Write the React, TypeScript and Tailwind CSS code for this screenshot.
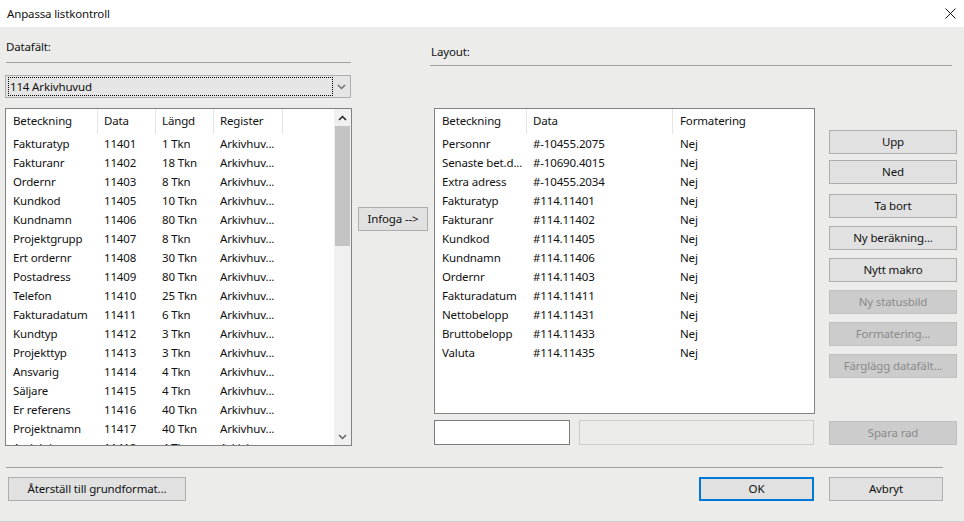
import React from "react"

const fields = [
  ["Fakturatyp", "11401", "1 Tkn"],
  ["Fakturanr", "11402", "18 Tkn"],
  ["Ordernr", "11403", "8 Tkn"],
  ["Kundkod", "11405", "10 Tkn"],
  ["Kundnamn", "11406", "80 Tkn"],
  ["Projektgrupp", "11407", "8 Tkn"],
  ["Ert ordernr", "11408", "30 Tkn"],
  ["Postadress", "11409", "80 Tkn"],
  ["Telefon", "11410", "25 Tkn"],
  ["Fakturadatum", "11411", "6 Tkn"],
  ["Kundtyp", "11412", "3 Tkn"],
  ["Projekttyp", "11413", "3 Tkn"],
  ["Ansvarig", "11414", "4 Tkn"],
  ["Säljare", "11415", "4 Tkn"],
  ["Er referens", "11416", "40 Tkn"],
  ["Projektnamn", "11417", "40 Tkn"],
  ["Avdelning", "11418", "4 Tkn"],
]

const layout = [
  ["Personnr", "#-10455.2075"],
  ["Senaste bet.d...", "#-10690.4015"],
  ["Extra adress", "#-10455.2034"],
  ["Fakturatyp", "#114.11401"],
  ["Fakturanr", "#114.11402"],
  ["Kundkod", "#114.11405"],
  ["Kundnamn", "#114.11406"],
  ["Ordernr", "#114.11403"],
  ["Fakturadatum", "#114.11411"],
  ["Nettobelopp", "#114.11431"],
  ["Bruttobelopp", "#114.11433"],
  ["Valuta", "#114.11435"],
]

function Btn({ label, disabled, w = "w-full" }: { label: string; disabled?: boolean; w?: string }) {
  return (
    <div
      className={
        disabled
          ? `${w} h-[24px] flex items-center justify-center border border-[#bfbfbf] bg-[#cccccc] text-[#8a8a8a]`
          : `${w} h-[24px] flex items-center justify-center border border-[#adadad] bg-[#e1e1e1]`
      }
    >
      {label}
    </div>
  )
}

function Chevron({ up, color = "#606060" }: { up?: boolean; color?: string }) {
  return (
    <svg width="9" height="6" viewBox="0 0 9 6">
      <polyline
        points={up ? "1,5 4.5,1.5 8,5" : "1,1 4.5,4.5 8,1"}
        fill="none"
        stroke={color}
        strokeWidth="1.5"
      />
    </svg>
  )
}

export default function App() {
  return (
    <div className="w-[964px] h-[522px] bg-[#ececea] font-['Noto_Sans'] text-[11.5px] tracking-[-0.15px] text-[#111] flex flex-col overflow-hidden border-b border-[#cfcfcf]">
      {/* title bar */}
      <div className="h-[27px] shrink-0 bg-white flex items-center justify-between pl-[7px] pr-[8px]">
        <span>Anpassa listkontroll</span>
        <svg width="11" height="11" viewBox="0 0 11 11">
          <path d="M0.5 0.5 L10.5 10.5 M10.5 0.5 L0.5 10.5" stroke="#111" strokeWidth="1" />
        </svg>
      </div>

      <div className="flex h-[440px] shrink-0">
        {/* left column */}
        <div className="ml-[5px] w-[347px] flex flex-col">
          <div className="mt-[12px] h-[16px] leading-[16px] pl-[1px]">Datafält:</div>
          <div className="mt-[7px] ml-[1px] h-px w-[345px] bg-[#a0a0a0]" />
          <div className="mt-[12px] h-[23px] w-[346px] border border-[#adadad] bg-[#e5e5e5] flex">
            <div className="flex-1 my-[1px] ml-[2px] border border-dotted border-black flex items-center pl-px leading-none">
              114 Arkivhuvud
            </div>
            <div className="w-[17px] flex items-center justify-center">
              <Chevron color="#707070" />
            </div>
          </div>
          <div className="mt-[10px] h-[338px] border border-[#828282] bg-white flex">
            <div className="flex-1 overflow-hidden">
              <div className="h-[25px] flex leading-[23px]">
                <div className="w-[92px] pl-[7px] border-r border-[#e5e5e5]">Beteckning</div>
                <div className="w-[58px] pl-[6px] border-r border-[#e5e5e5]">Data</div>
                <div className="w-[58px] pl-[6px] border-r border-[#e5e5e5]">Längd</div>
                <div className="w-[69px] pl-[6px] border-r border-[#e5e5e5]">Register</div>
              </div>
              {fields.map(([name, id, len]) => (
                <div key={id} className="h-[19px] flex items-center">
                  <div className="w-[92px] pl-[7px]">{name}</div>
                  <div className="w-[58px] pl-[6px]">{id}</div>
                  <div className="w-[58px] pl-[6px]">{len}</div>
                  <div className="w-[69px] pl-[6px]">Arkivhuv...</div>
                </div>
              ))}
            </div>
            <div className="w-[17px] bg-[#f0f0f0] flex flex-col">
              <div className="h-[17px] flex items-center justify-center">
                <Chevron up color="#202020" />
              </div>
              <div className="mx-px h-[120px] bg-[#c4c4c4]" />
              <div className="flex-1" />
              <div className="h-[17px] flex items-center justify-center">
                <Chevron color="#606060" />
              </div>
            </div>
          </div>
        </div>

        {/* insert button */}
        <div className="ml-[6px] w-[70px] pt-[180px]">
          <Btn label="Infoga -->" />
        </div>

        {/* right column */}
        <div className="ml-[2px] flex-1 flex flex-col">
          <div className="mt-[17px] h-[16px] leading-[16px] pl-[1px]">Layout:</div>
          <div className="mt-[5px] h-px w-[522px] bg-[#a0a0a0]" />
          <div className="mt-[42px] flex">
            <div className="ml-[4px] w-[381px] flex flex-col">
              <div className="h-[306px] border border-[#828282] bg-white overflow-hidden">
                <div className="h-[25px] flex leading-[23px]">
                  <div className="w-[92px] pl-[7px] border-r border-[#e5e5e5]">Beteckning</div>
                  <div className="w-[146px] pl-[6px] border-r border-[#e5e5e5]">Data</div>
                  <div className="pl-[7px]">Formatering</div>
                </div>
                {layout.map(([name, ref]) => (
                  <div key={ref} className="h-[19px] flex items-center">
                    <div className="w-[92px] pl-[7px] whitespace-nowrap">{name}</div>
                    <div className="w-[146px] pl-[6px]">{ref}</div>
                    <div className="pl-[7px]">Nej</div>
                  </div>
                ))}
              </div>
              <div className="mt-[6px] h-[25px] flex">
                <div className="w-[136px] border border-[#7a7a7a] bg-white" />
                <div className="ml-[9px] w-[235px] border border-[#cccccc] bg-[#ececea]" />
              </div>
            </div>

            <div className="ml-[14px] w-[128px] flex flex-col pt-[22px]">
              <Btn label="Upp" />
              <div className="mt-[6px]"><Btn label="Ned" /></div>
              <div className="mt-[10px]"><Btn label="Ta bort" /></div>
              <div className="mt-[8px]"><Btn label="Ny beräkning..." /></div>
              <div className="mt-[8px]"><Btn label="Nytt makro" /></div>
              <div className="mt-[8px]"><Btn label="Ny statusbild" disabled /></div>
              <div className="mt-[8px]"><Btn label="Formatering..." disabled /></div>
              <div className="mt-[8px]"><Btn label="Färglägg datafält..." disabled /></div>
              <div className="mt-[43px]"><Btn label="Spara rad" disabled /></div>
            </div>
          </div>
        </div>
      </div>

      {/* bottom */}
      <div className="ml-[6px] h-px w-[937px] bg-[#a0a0a0]" />
      <div className="mt-[9px] flex">
        <div className="ml-[8px]"><Btn label="Återställ till grundformat..." w="w-[178px]" /></div>
        <div className="ml-[513px] w-[115px] h-[24px] flex items-center justify-center border-2 border-[#0078d7] bg-[#e1e1e1]">
          OK
        </div>
        <div className="ml-[15px]"><Btn label="Avbryt" w="w-[114px]" /></div>
      </div>
    </div>
  )
}
